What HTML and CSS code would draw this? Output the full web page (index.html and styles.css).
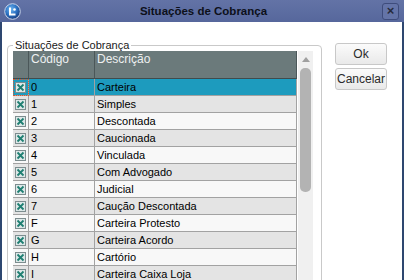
FILE: index.html
```html
<!DOCTYPE html>
<html lang="pt-BR">
<head>
  <meta charset="UTF-8">
  <meta name="viewport" content="width=device-width, initial-scale=1.0">
  <title>Situações de Cobrança</title>
  <link rel="stylesheet" href="styles.css">
</head>
<body>
  <div class="window">
    <div class="titlebar">
      <svg class="app-icon" width="17" height="17" viewBox="0 0 17 17">
        <defs>
          <radialGradient id="globe" cx="40%" cy="35%" r="65%">
            <stop offset="0" stop-color="#6fb6f0"/>
            <stop offset="0.6" stop-color="#2a6fc0"/>
            <stop offset="1" stop-color="#1a3f80"/>
          </radialGradient>
        </defs>
        <circle cx="8.5" cy="8.5" r="7.8" fill="url(#globe)" stroke="#c9d4ea" stroke-width="1"/>
        <path d="M6 4.5 V11.5 H11.5" fill="none" stroke="#ffffff" stroke-width="2"/>
        <circle cx="10.5" cy="6.5" r="1.3" fill="#ffffff"/>
      </svg>
      <span class="title">Situações de Cobrança</span>
      <span class="close-btn">×</span>
    </div>

    <div class="content">
      <fieldset class="group">
        <legend>Situações de Cobrança</legend>
        <div class="grid-wrap">
          <table class="grid">
            <colgroup>
              <col class="col-check">
              <col class="col-code">
              <col class="col-desc">
            </colgroup>
            <thead>
              <tr>
                <th></th>
                <th>Código</th>
                <th>Descrição</th>
              </tr>
            </thead>
            <tbody id="rows"></tbody>
          </table>
          <div class="scrollbar">
            <span class="arrow-up"></span>
            <span class="thumb"></span>
          </div>
        </div>
      </fieldset>

      <div class="buttons">
        <button class="btn">Ok</button>
        <button class="btn">Cancelar</button>
      </div>
    </div>
  </div>

  <script>
    const situacoes = [
      ["0", "Carteira"],
      ["1", "Simples"],
      ["2", "Descontada"],
      ["3", "Caucionada"],
      ["4", "Vinculada"],
      ["5", "Com Advogado"],
      ["6", "Judicial"],
      ["7", "Caução Descontada"],
      ["F", "Carteira Protesto"],
      ["G", "Carteira Acordo"],
      ["H", "Cartório"],
      ["I", "Carteira Caixa Loja"]
    ];

    const checkIcon =
      '<svg class="check" width="11" height="11" viewBox="0 0 11 11">' +
      '<rect x="0.5" y="0.5" width="10" height="10" fill="#dde8e8" stroke="#7d8d8f"/>' +
      '<path d="M2.5 2.5 L8.5 8.5 M8.5 2.5 L2.5 8.5" stroke="#1f7f72" stroke-width="1.8"/>' +
      '</svg>';

    const tbody = document.getElementById("rows");
    situacoes.forEach(function (s, i) {
      const tr = document.createElement("tr");
      if (i === 0) tr.classList.add("selected");
      else if (i % 2 === 1) tr.classList.add("alt");
      tr.innerHTML = `<td class="cell-check">${checkIcon}</td><td>${s[0]}</td><td>${s[1]}</td>`;
      tbody.appendChild(tr);
    });
  </script>
</body>
</html>
```

FILE: styles.css
```css
body {
  margin: 0;
  font-family: 'Liberation Sans', Arial, sans-serif;
  background-color: #ffffff;
}

.window {
  width: 404px;
  height: 280px;
  overflow: hidden;
  background-color: #ffffff;
}

.titlebar {
  height: 22px;
  display: flex;
  align-items: center;
  padding: 0 5px 0 4px;
  box-sizing: border-box;
  background: linear-gradient(#6373a6, #56679c);
}

.app-icon {
  flex: none;
}

.title {
  flex: 1;
  text-align: center;
  font-size: 11.5px;
  font-weight: bold;
  color: #0d101a;
  padding-left: 4px;
}

.close-btn {
  width: 15px;
  height: 15px;
  border: 1px solid #3e4c7c;
  border-radius: 3px;
  background-color: #6474a8;
  color: #262b3c;
  font-size: 13px;
  font-weight: bold;
  line-height: 14px;
  text-align: center;
}

.content {
  display: flex;
  align-items: flex-start;
  gap: 13px;
  height: 258px;
  padding: 17px 0 0 5px;
  box-sizing: border-box;
  border-left: 2px solid #2e4770;
  border-right: 2px solid #2e4770;
}

.group {
  width: 314px;
  height: 260px;
  box-sizing: border-box;
  margin: 0;
  padding: 0 8px 0 5px;
  border: 1px solid #c9c9c9;
  border-radius: 4px;
  flex: none;
}

.group legend {
  font-size: 11px;
  line-height: 12px;
  color: #1a1a1a;
  padding: 0 2px;
}

.grid-wrap {
  display: flex;
  align-items: flex-start;
}

.grid {
  width: 284px;
  border-collapse: separate;
  border-spacing: 0;
  table-layout: fixed;
  font-size: 11px;
  color: #000000;
}

.col-check {
  width: 16px;
}

.col-code {
  width: 66px;
}

.grid thead tr {
  height: 28px;
}

.grid th {
  padding: 1px 2px 0;
  vertical-align: top;
  text-align: left;
  font-size: 12px;
  line-height: 14px;
  font-weight: normal;
  color: #eef0f0;
  background-color: #6b7a7b;
  border-right: 1px solid #4b5759;
  border-bottom: 1px solid #404b4d;
}

.grid tbody tr {
  height: 17px;
}

.grid td {
  padding: 0 2px;
  line-height: 13px;
  white-space: nowrap;
  background-color: #f8f8f8;
  border-right: 1px solid #a2a2a2;
  border-bottom: 1px solid #a2a2a2;
}

.grid tr.alt td {
  background-color: #e4e4e4;
}

.grid tr.selected td {
  background-color: #1d9bbe;
}

.grid td.cell-check {
  padding: 0;
  text-align: center;
}

.grid tr.selected td.cell-check {
  outline: 1px dotted #e0552a;
  outline-offset: -1px;
}

.check {
  display: block;
  margin: 0 auto;
}

.scrollbar {
  width: 15px;
  height: 240px;
  margin-left: 1px;
  background-color: #f0f0f0;
  display: flex;
  flex-direction: column;
  align-items: center;
  flex: none;
}

.arrow-up {
  margin-top: 6px;
  width: 0;
  height: 0;
  border-left: 4px solid transparent;
  border-right: 4px solid transparent;
  border-bottom: 5px solid #a0a0a0;
}

.thumb {
  margin-top: 6px;
  width: 11px;
  height: 124px;
  border-radius: 5px;
  background-color: #b3b3b3;
}

.buttons {
  display: flex;
  flex-direction: column;
  gap: 3px;
  padding-top: 4px;
}

.btn {
  width: 52px;
  height: 22px;
  padding: 0;
  font-family: 'Liberation Sans', Arial, sans-serif;
  font-size: 12px;
  color: #2a2a2a;
  background: linear-gradient(#fbfbfb, #e9e9e9);
  border: 1px solid #c8c8c8;
  border-radius: 3px;
}
```
